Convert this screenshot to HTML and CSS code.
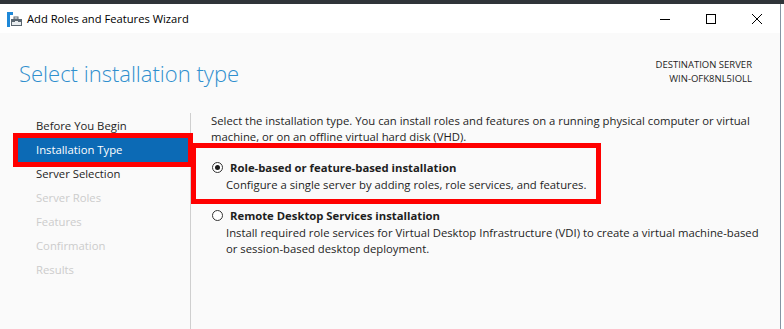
FILE: index.html
```html
<!DOCTYPE html>
<html lang="en">
<head>
<meta charset="utf-8">
<title>Add Roles and Features Wizard</title>
<link rel="stylesheet" href="styles.css">
</head>
<body>
<div class="desktop"></div>
<div class="window">
  <div class="titlebar">
    <svg class="app-icon" width="16" height="15" viewBox="0 0 16 15">
      <rect x="0" y="0" width="6" height="3" fill="#1e88d8"/>
      <rect x="0" y="0" width="3" height="15" fill="#1e88d8"/>
      <rect x="7" y="5" width="4" height="2" fill="none" stroke="#5a6670" stroke-width="1"/>
      <rect x="4.5" y="7.5" width="10" height="6" fill="#e8ecef" stroke="#5a6670" stroke-width="1"/>
      <rect x="5" y="8" width="9" height="2" fill="#5a6670"/>
      <rect x="8" y="9" width="3" height="2" fill="#e8ecef"/>
    </svg>
    <div class="title">Add Roles and Features Wizard</div>
    <div class="controls">
      <div class="ctl"><svg width="10" height="10" viewBox="0 0 10 10"><line x1="0" y1="5.5" x2="10" y2="5.5" stroke="#000" stroke-width="1"/></svg></div>
      <div class="ctl"><svg width="10" height="10" viewBox="0 0 10 10"><rect x="0.5" y="0.5" width="9" height="9" fill="none" stroke="#000" stroke-width="1"/></svg></div>
      <div class="ctl"><svg width="10" height="10" viewBox="0 0 10 10"><path d="M0 0 L10 10 M10 0 L0 10" stroke="#000" stroke-width="1"/></svg></div>
    </div>
  </div>
  <div class="content">
    <div class="header">
      <h1 class="heading">Select installation type</h1>
      <div class="dest">
        <div>DESTINATION SERVER</div>
        <div>WIN-OFK8NL5IOLL</div>
      </div>
    </div>
    <div class="body">
      <nav class="nav">
        <div class="nav-item">Before You Begin</div>
        <div class="nav-item selected">Installation Type</div>
        <div class="nav-item">Server Selection</div>
        <div class="nav-item disabled">Server Roles</div>
        <div class="nav-item disabled">Features</div>
        <div class="nav-item disabled">Confirmation</div>
        <div class="nav-item disabled">Results</div>
      </nav>
      <main class="main">
        <p class="intro">Select the installation type. You can install roles and features on a running physical computer or virtual<br>machine, or on an offline virtual hard disk (VHD).</p>
        <div class="option highlighted">
          <div class="option-row">
            <span class="radio checked"></span>
            <span class="option-label">Role-based or feature-based installation</span>
          </div>
          <div class="option-desc">Configure a single server by adding roles, role services, and features.</div>
        </div>
        <div class="option">
          <div class="option-row">
            <span class="radio"></span>
            <span class="option-label">Remote Desktop Services installation</span>
          </div>
          <div class="option-desc">Install required role services for Virtual Desktop Infrastructure (VDI) to create a virtual machine-based<br>or session-based desktop deployment.</div>
        </div>
      </main>
    </div>
  </div>
</div>
</body>
</html>
```
FILE: styles.css
```css
html, body {
  margin: 0;
  padding: 0;
  background: #ffffff;
  overflow: hidden;
}
body {
  font-family: "Open Sans", "Noto Sans", sans-serif;
  font-size: 11.3px;
  color: #1e1e1e;
  width: 784px;
  height: 329px;
}
.desktop {
  height: 4px;
  background: #2f3439;
}
.window {
  width: 780px;
  height: 325px;
  border-right: 1px solid #8595a3;
  background: #fafafa;
  display: flex;
  flex-direction: column;
}
.titlebar {
  height: 29px;
  background: #ffffff;
  display: flex;
  align-items: center;
  flex-shrink: 0;
}
.app-icon {
  margin-left: 7px;
  margin-top: 1px;
  display: block;
}
.title {
  margin-left: 4px;
  font-size: 11.2px;
  color: #000;
  white-space: nowrap;
}
.controls {
  margin-left: auto;
  display: flex;
  height: 29px;
}
.ctl {
  width: 46px;
  height: 29px;
  display: flex;
  align-items: center;
  justify-content: center;
}
.ctl svg { display: block; }
.content {
  flex: 1;
  display: flex;
  flex-direction: column;
}
.header {
  height: 80px;
  box-sizing: border-box;
  padding: 25px 28px 0 19px;
  display: flex;
  justify-content: space-between;
  align-items: flex-start;
}
.heading {
  margin: 0;
  font-size: 22px;
  line-height: 30px;
  font-weight: 300;
  color: #2f8fce;
  white-space: nowrap;
}
.dest {
  text-align: right;
  font-size: 9.5px;
  line-height: 14px;
  color: #1e1e1e;
}
.body {
  flex: 1;
  display: flex;
}
.nav {
  width: 190px;
  border-right: 1px solid #cfcfcf;
  padding-top: 1px;
  flex-shrink: 0;
}
.nav-item {
  height: 24px;
  line-height: 24px;
  margin-left: 18px;
  width: 170px;
  box-sizing: border-box;
  padding-left: 18px;
  white-space: nowrap;
  color: #1e1e1e;
}
.nav-item.selected {
  background: #0c6ab5;
  color: #ffffff;
  outline: 5px solid #ff0000;
}
.nav-item.disabled {
  color: #cccccc;
}
.main {
  flex: 1;
  padding-left: 5px;
}
.intro {
  margin: 0 0 0 15px;
  line-height: 16px;
  white-space: nowrap;
}
.option {
  width: 400px;
  box-sizing: border-box;
  padding: 8px 0 6px 16px;
}
.option.highlighted {
  margin-top: 3px;
  padding-top: 11px;
  outline: 5px solid #ff0000;
}
.option-row {
  display: flex;
  align-items: center;
  height: 16px;
}
.radio {
  width: 11px;
  height: 11px;
  box-sizing: border-box;
  border: 1px solid #333333;
  border-radius: 50%;
  background: #ffffff;
  display: flex;
  align-items: center;
  justify-content: center;
  flex-shrink: 0;
}
.radio.checked::after {
  content: "";
  width: 5px;
  height: 5px;
  border-radius: 50%;
  background: #1a1a1a;
}
.option-label {
  margin-left: 7px;
  font-weight: 700;
  white-space: nowrap;
}
.option-desc {
  margin-top: 2px;
  margin-left: 14px;
  line-height: 16px;
  white-space: nowrap;
}
```
